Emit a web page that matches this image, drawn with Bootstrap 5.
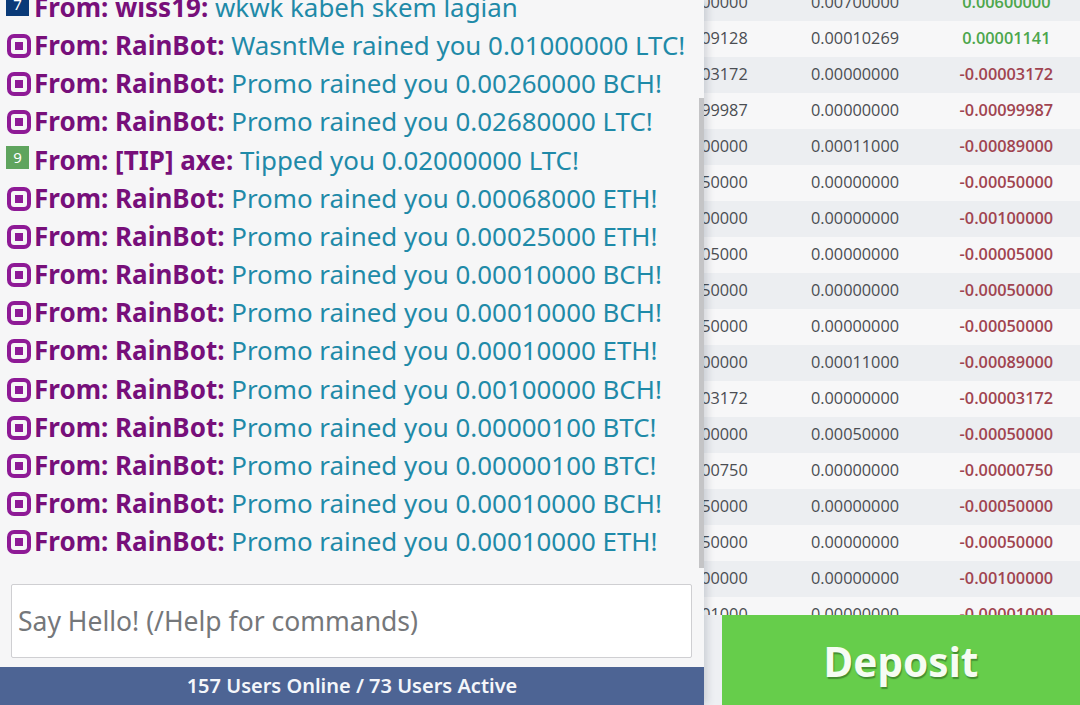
<!DOCTYPE html>
<html lang="en">
<head>
  <meta charset="UTF-8">
  <meta name="viewport" content="width=device-width, initial-scale=1.0">
  <title>Chat</title>
  <link href="https://cdn.jsdelivr.net/npm/bootstrap@5.3.0/dist/css/bootstrap.min.css" rel="stylesheet">
  <script src="https://cdn.jsdelivr.net/npm/bootstrap@5.3.0/dist/js/bootstrap.bundle.min.js"></script>
  <style>
    html, body { height: 705px; overflow: hidden; }
    body { background: #f7f7f8; font-family: "Noto Sans", "Open Sans", sans-serif; }
    .bets-wrap { padding-left: 628px; margin-top: -15px; }
    .bets-table { width: 454px; table-layout: fixed; font-family: "Open Sans", sans-serif; font-size: 16.3px; color: #4a4d52; }
    .bets-table td { height: 36px; padding: 0 0 2px; text-align: center; vertical-align: middle; border: 0; line-height: 30px; }
    .bets-table tr:nth-child(odd) td { background: #eceef1; }
    .amt-up { color: #4ca64c; font-weight: 600; }
    .amt-down { color: #a04450; font-weight: 600; }
    .chat-panel { position: absolute; top: 0; left: 0; width: 704px; height: 705px; background: #f6f6f7; box-shadow: 3px 0 8px rgba(60, 70, 90, .2); }
    .chat-log { overflow: hidden; padding: 0 0 23px 6px; }
    .chat-line { flex: none; height: 38.2px; line-height: 38px; font-size: 25.9px; white-space: nowrap; color: #1f8aa8; }
    .chat-line b { color: #770f7a; font-weight: 700; font-size: 26px; }
    .rain-icon { width: 24px; height: 24px; margin: 0 3px 0 1px; vertical-align: -3px; }
    .level-tag { display: inline-block; width: 23px; height: 23px; margin-right: 5px; font-size: 15px; line-height: 23px; text-align: center; color: #fff; vertical-align: 7px; }
    .level-navy { background: #0a3a78; }
    .level-green { background: #5fa45e; }
    .chat-scroll { position: absolute; top: 98px; right: 0; width: 5px; height: 470px; background: #c4c4c6; }
    .chat-input { height: 76px; margin: 0 12px 9px 11px; width: 681px; border: 1px solid #cfcfd2; border-radius: 2px; padding: 0 6px; font-size: 26.5px; font-family: "Noto Sans", sans-serif; }
    .chat-input::placeholder { color: #75777a; opacity: 1; }
    .online-bar { height: 38px; line-height: 38px; background: #4d6494; color: #f4f6fa; font-size: 20px; font-weight: 600; text-align: center; }
    .deposit-btn { position: absolute; left: 722px; top: 615px; width: 358px; height: 90px; border: 0; border-radius: 0; padding-top: 10px; background: #66cd4b; color: #f6fcf3; font-family: "Noto Sans", sans-serif; font-size: 40.5px; font-weight: 700; text-shadow: 1px 2px 1px rgba(40, 90, 30, .55); }
    .deposit-gutter { position: absolute; left: 704px; top: 615px; width: 18px; height: 90px; background: #eef0f3; }
  </style>
</head>
<body>
  <div class="bets-wrap">
    <table class="bets-table">
      <tbody>
        <tr><td>0.00100000</td><td>0.00700000</td><td class="amt-up">0.00600000</td></tr>
        <tr><td>0.00009128</td><td>0.00010269</td><td class="amt-up">0.00001141</td></tr>
        <tr><td>0.00003172</td><td>0.00000000</td><td class="amt-down">-0.00003172</td></tr>
        <tr><td>0.00099987</td><td>0.00000000</td><td class="amt-down">-0.00099987</td></tr>
        <tr><td>0.00100000</td><td>0.00011000</td><td class="amt-down">-0.00089000</td></tr>
        <tr><td>0.00050000</td><td>0.00000000</td><td class="amt-down">-0.00050000</td></tr>
        <tr><td>0.00100000</td><td>0.00000000</td><td class="amt-down">-0.00100000</td></tr>
        <tr><td>0.00005000</td><td>0.00000000</td><td class="amt-down">-0.00005000</td></tr>
        <tr><td>0.00050000</td><td>0.00000000</td><td class="amt-down">-0.00050000</td></tr>
        <tr><td>0.00050000</td><td>0.00000000</td><td class="amt-down">-0.00050000</td></tr>
        <tr><td>0.00100000</td><td>0.00011000</td><td class="amt-down">-0.00089000</td></tr>
        <tr><td>0.00003172</td><td>0.00000000</td><td class="amt-down">-0.00003172</td></tr>
        <tr><td>0.00100000</td><td>0.00050000</td><td class="amt-down">-0.00050000</td></tr>
        <tr><td>0.00000750</td><td>0.00000000</td><td class="amt-down">-0.00000750</td></tr>
        <tr><td>0.00050000</td><td>0.00000000</td><td class="amt-down">-0.00050000</td></tr>
        <tr><td>0.00050000</td><td>0.00000000</td><td class="amt-down">-0.00050000</td></tr>
        <tr><td>0.00100000</td><td>0.00000000</td><td class="amt-down">-0.00100000</td></tr>
        <tr><td>0.00001000</td><td>0.00000000</td><td class="amt-down">-0.00001000</td></tr>
      </tbody>
    </table>
  </div>

  <div class="deposit-gutter"></div>
  <button type="button" class="btn deposit-btn">Deposit</button>

  <div class="chat-panel d-flex flex-column">
    <div class="chat-log flex-grow-1 d-flex flex-column justify-content-end">
      <div class="chat-line"><span class="level-tag level-navy">7</span><b>From: wiss19:</b> wkwk kabeh skem lagian</div>
      <div class="chat-line"><svg class="rain-icon" viewBox="0 0 24 24"><rect x="2" y="2" width="20" height="20" rx="5" fill="none" stroke="#8e1a96" stroke-width="4"/><rect x="8" y="8" width="8" height="8" fill="#8e1a96"/></svg><b>From: RainBot:</b> WasntMe rained you 0.01000000 LTC!</div>
      <div class="chat-line"><svg class="rain-icon" viewBox="0 0 24 24"><rect x="2" y="2" width="20" height="20" rx="5" fill="none" stroke="#8e1a96" stroke-width="4"/><rect x="8" y="8" width="8" height="8" fill="#8e1a96"/></svg><b>From: RainBot:</b> Promo rained you 0.00260000 BCH!</div>
      <div class="chat-line"><svg class="rain-icon" viewBox="0 0 24 24"><rect x="2" y="2" width="20" height="20" rx="5" fill="none" stroke="#8e1a96" stroke-width="4"/><rect x="8" y="8" width="8" height="8" fill="#8e1a96"/></svg><b>From: RainBot:</b> Promo rained you 0.02680000 LTC!</div>
      <div class="chat-line"><span class="level-tag level-green">9</span><b>From: [TIP] axe:</b> Tipped you 0.02000000 LTC!</div>
      <div class="chat-line"><svg class="rain-icon" viewBox="0 0 24 24"><rect x="2" y="2" width="20" height="20" rx="5" fill="none" stroke="#8e1a96" stroke-width="4"/><rect x="8" y="8" width="8" height="8" fill="#8e1a96"/></svg><b>From: RainBot:</b> Promo rained you 0.00068000 ETH!</div>
      <div class="chat-line"><svg class="rain-icon" viewBox="0 0 24 24"><rect x="2" y="2" width="20" height="20" rx="5" fill="none" stroke="#8e1a96" stroke-width="4"/><rect x="8" y="8" width="8" height="8" fill="#8e1a96"/></svg><b>From: RainBot:</b> Promo rained you 0.00025000 ETH!</div>
      <div class="chat-line"><svg class="rain-icon" viewBox="0 0 24 24"><rect x="2" y="2" width="20" height="20" rx="5" fill="none" stroke="#8e1a96" stroke-width="4"/><rect x="8" y="8" width="8" height="8" fill="#8e1a96"/></svg><b>From: RainBot:</b> Promo rained you 0.00010000 BCH!</div>
      <div class="chat-line"><svg class="rain-icon" viewBox="0 0 24 24"><rect x="2" y="2" width="20" height="20" rx="5" fill="none" stroke="#8e1a96" stroke-width="4"/><rect x="8" y="8" width="8" height="8" fill="#8e1a96"/></svg><b>From: RainBot:</b> Promo rained you 0.00010000 BCH!</div>
      <div class="chat-line"><svg class="rain-icon" viewBox="0 0 24 24"><rect x="2" y="2" width="20" height="20" rx="5" fill="none" stroke="#8e1a96" stroke-width="4"/><rect x="8" y="8" width="8" height="8" fill="#8e1a96"/></svg><b>From: RainBot:</b> Promo rained you 0.00010000 ETH!</div>
      <div class="chat-line"><svg class="rain-icon" viewBox="0 0 24 24"><rect x="2" y="2" width="20" height="20" rx="5" fill="none" stroke="#8e1a96" stroke-width="4"/><rect x="8" y="8" width="8" height="8" fill="#8e1a96"/></svg><b>From: RainBot:</b> Promo rained you 0.00100000 BCH!</div>
      <div class="chat-line"><svg class="rain-icon" viewBox="0 0 24 24"><rect x="2" y="2" width="20" height="20" rx="5" fill="none" stroke="#8e1a96" stroke-width="4"/><rect x="8" y="8" width="8" height="8" fill="#8e1a96"/></svg><b>From: RainBot:</b> Promo rained you 0.00000100 BTC!</div>
      <div class="chat-line"><svg class="rain-icon" viewBox="0 0 24 24"><rect x="2" y="2" width="20" height="20" rx="5" fill="none" stroke="#8e1a96" stroke-width="4"/><rect x="8" y="8" width="8" height="8" fill="#8e1a96"/></svg><b>From: RainBot:</b> Promo rained you 0.00000100 BTC!</div>
      <div class="chat-line"><svg class="rain-icon" viewBox="0 0 24 24"><rect x="2" y="2" width="20" height="20" rx="5" fill="none" stroke="#8e1a96" stroke-width="4"/><rect x="8" y="8" width="8" height="8" fill="#8e1a96"/></svg><b>From: RainBot:</b> Promo rained you 0.00010000 BCH!</div>
      <div class="chat-line"><svg class="rain-icon" viewBox="0 0 24 24"><rect x="2" y="2" width="20" height="20" rx="5" fill="none" stroke="#8e1a96" stroke-width="4"/><rect x="8" y="8" width="8" height="8" fill="#8e1a96"/></svg><b>From: RainBot:</b> Promo rained you 0.00010000 ETH!</div>
    </div>
    <div class="chat-scroll"></div>
    <input type="text" class="form-control chat-input" placeholder="Say Hello! (/Help for commands)">
    <div class="online-bar">157 Users Online / 73 Users Active</div>
  </div>
</body>
</html>
